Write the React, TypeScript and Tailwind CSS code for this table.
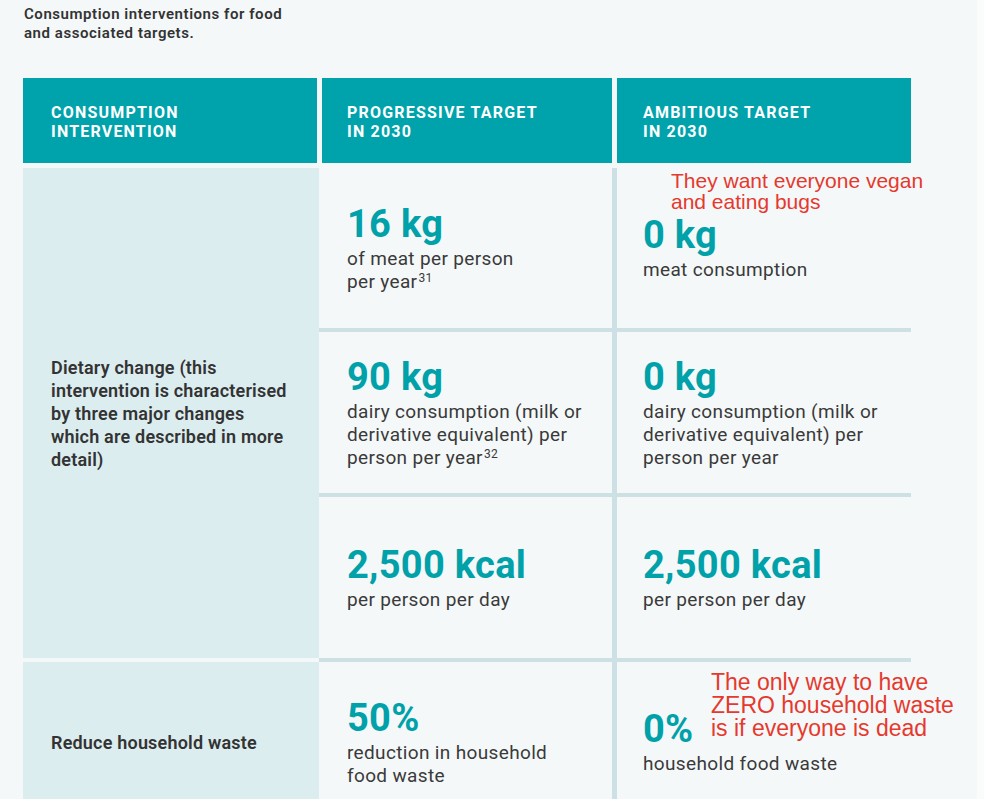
import React from 'react';

const TEAL = 'text-[#00a1a9]';

function Cell({ value, lines, sup, pl }: { value: string; lines: string[]; sup?: string; pl: string }) {
  return (
    <div className={`bg-[#f4f8f9] flex flex-col justify-center pb-[3px] ${pl}`}>
      <div className={`font-bold text-[38px] leading-[46px] tracking-[0.3px] ${TEAL}`}>{value}</div>
      <div className="text-[19px] leading-[23px] tracking-[0.35px] text-[#3a3a3a]">
        {lines.map((l, i) => (
          <div key={i} className="whitespace-nowrap">
            {l}
            {sup && i === lines.length - 1 && <sup className="text-[12px] ml-[1px]">{sup}</sup>}
          </div>
        ))}
      </div>
    </div>
  );
}

export default function App() {
  return (
    <div className="flex h-[799px] overflow-hidden font-['Roboto','Liberation_Sans',sans-serif]">
      <div className="w-[977px] shrink-0 bg-[#f4f8f9] pl-[23px] pt-[5px]">
        {/* Caption */}
        <div className="pl-[1px] text-[15px] leading-[18.5px] font-semibold tracking-[0.55px] text-[#333]">
          Consumption interventions for food
          <br />
          and associated targets.
        </div>

        {/* Header */}
        <div className="mt-[36px] flex gap-[5px] h-[85px] text-white font-bold text-[16px] leading-[19px] tracking-[1.2px] uppercase">
          <div className="w-[294px] bg-[#00a3ab] flex items-center pt-[2px] pl-[28px]">
            Consumption
            <br />
            Intervention
          </div>
          <div className="w-[290px] bg-[#00a3ab] flex items-center pt-[2px] pl-[25px]">
            Progressive target
            <br />
            in 2030
          </div>
          <div className="w-[294px] bg-[#00a3ab] flex items-center pt-[2px] pl-[26px]">
            Ambitious target
            <br />
            in 2030
          </div>
        </div>

        {/* Body */}
        <div className="mt-[5px] flex">
          <div className="w-[296px] flex flex-col gap-[4px] text-[18px] leading-[23px] font-semibold tracking-[0.2px] text-[#333]">
            <div className="h-[490px] bg-[#dcedf0] flex items-center pl-[28px]">
              <div className="whitespace-nowrap">
                Dietary change (this
                <br />
                intervention is characterised
                <br />
                by three major changes
                <br />
                which are described in more
                <br />
                detail)
              </div>
            </div>
            <div className="h-[160px] bg-[#dcedf0] flex items-center pl-[28px]">Reduce household waste</div>
          </div>

          <div className="grid grid-cols-[293px_294px] grid-rows-[160px_161px_161px_160px] gap-x-[5px] gap-y-[4px] bg-[#cde0e4]">
            <Cell value="16 kg" lines={['of meat per person', 'per year']} sup="31" pl="pl-[28px]" />
            <div className="relative">
              <div className="absolute left-[54px] top-[2px] z-10 font-['Liberation_Sans',Arial,sans-serif] text-[21px] leading-[21px] text-[#e6392d] whitespace-nowrap">
                They want everyone vegan
                <br />
                and eating bugs
              </div>
              <Cell value="0 kg" lines={['meat consumption']} pl="pl-[26px] h-full" />
            </div>

            <Cell value="90 kg" lines={['dairy consumption (milk or', 'derivative equivalent) per', 'person per year']} sup="32" pl="pl-[28px]" />
            <Cell value="0 kg" lines={['dairy consumption (milk or', 'derivative equivalent) per', 'person per year']} pl="pl-[26px]" />

            <Cell value="2,500 kcal" lines={['per person per day']} pl="pl-[28px]" />
            <Cell value="2,500 kcal" lines={['per person per day']} pl="pl-[26px]" />

            <Cell value="50%" lines={['reduction in household', 'food waste']} pl="pl-[28px]" />
            <div className="relative">
              <div className="absolute left-[94px] top-[9px] z-10 font-['Liberation_Sans',Arial,sans-serif] text-[23px] leading-[23px] text-[#e6392d] whitespace-nowrap">
                The only way to have
                <br />
                ZERO household waste
                <br />
                is if everyone is dead
              </div>
              <Cell value="0%" lines={['household food waste']} pl="pl-[26px] h-full" />
            </div>
          </div>
        </div>
      </div>
      <div className="flex-1 bg-[#fafcfc]" />
    </div>
  );
}
